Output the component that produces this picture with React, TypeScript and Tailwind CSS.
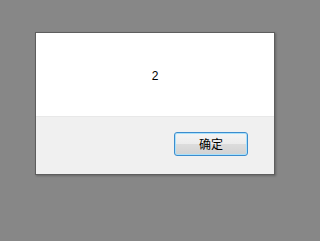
export default function App() {
  return (
    <div className="min-h-[241px] w-full bg-[#878787] pl-[35px] pt-[32px]">
      <div className="flex h-[143px] w-[240px] flex-col border border-[#5e5e5e] bg-white shadow-[1px_1px_2px_rgba(0,0,0,0.25)]">
        {/* message */}
        <div
          className="flex h-[83px] items-center justify-center pt-[2px] text-[12px] text-black"
          style={{ fontFamily: '"Liberation Sans", "Noto Sans CJK SC", sans-serif' }}
        >
          2
        </div>

        {/* footer */}
        <div className="flex flex-1 items-start justify-end border-t border-[#e8e8e8] bg-[#f0f0f0] pr-[26px] pt-[15px]">
          <button
            className="h-[24px] w-[74px] rounded-[3px] border border-[#3c8ccd] bg-[linear-gradient(to_bottom,#f4f4f4_0%,#ececec_48%,#dcdcdc_52%,#d2d2d2_100%)] text-[12px] text-black shadow-[inset_0_0_0_1px_#a9e1fb]"
            style={{ fontFamily: '"Noto Sans CJK SC", sans-serif' }}
          >
            确定
          </button>
        </div>
      </div>
    </div>
  )
}
